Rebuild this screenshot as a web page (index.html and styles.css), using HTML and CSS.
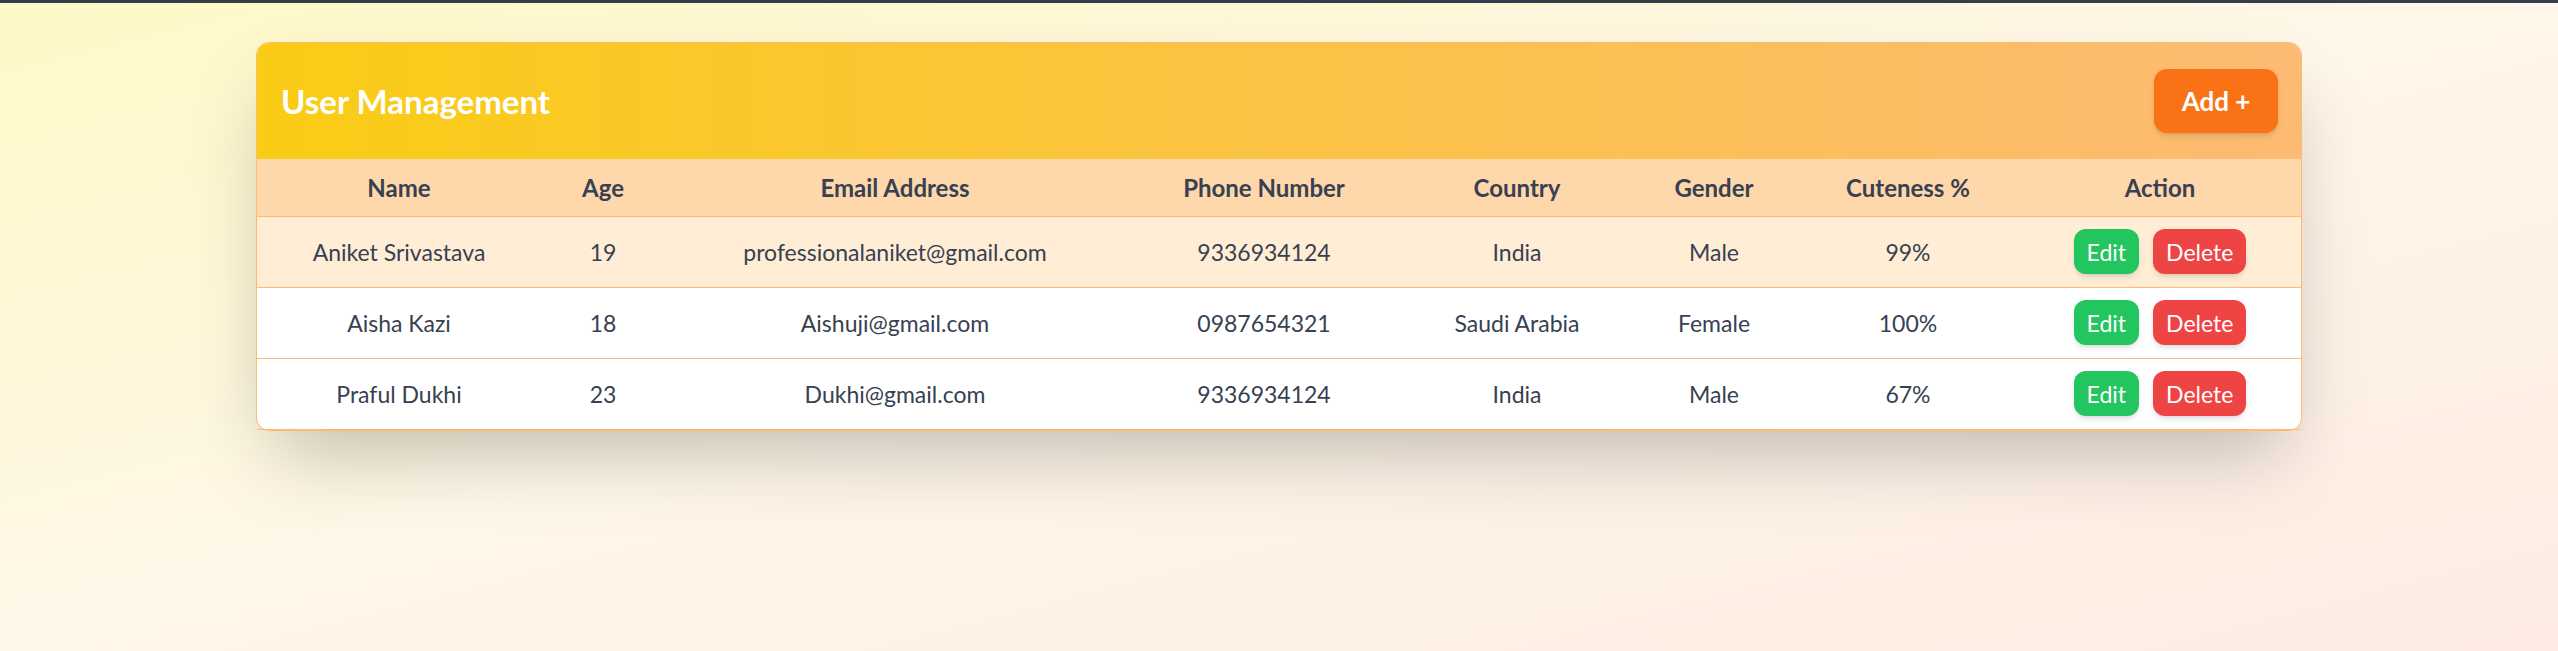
FILE: index.html
```html
<!DOCTYPE html>
<html lang="en">
<head>
<meta charset="utf-8">
<title>User Management</title>
<link rel="stylesheet" href="styles.css">
</head>
<body>
<div class="topbar"></div>
<main class="page">
  <section class="card">
    <header class="card-head">
      <h1 class="title">User Management</h1>
      <button class="btn btn-add">Add +</button>
    </header>
    <table class="users">
      <colgroup>
        <col class="c-name"><col class="c-age"><col class="c-email"><col class="c-phone">
        <col class="c-country"><col class="c-gender"><col class="c-cute"><col class="c-action">
      </colgroup>
      <thead>
        <tr>
          <th>Name</th><th>Age</th><th>Email Address</th><th>Phone Number</th>
          <th>Country</th><th>Gender</th><th>Cuteness %</th><th>Action</th>
        </tr>
      </thead>
      <tbody>
        <tr class="hl">
          <td>Aniket Srivastava</td><td>19</td><td>professionalaniket@gmail.com</td><td>9336934124</td>
          <td>India</td><td>Male</td><td>99%</td>
          <td><div class="actions"><button class="btn btn-edit">Edit</button><button class="btn btn-del">Delete</button></div></td>
        </tr>
        <tr>
          <td>Aisha Kazi</td><td>18</td><td>Aishuji@gmail.com</td><td>0987654321</td>
          <td>Saudi Arabia</td><td>Female</td><td>100%</td>
          <td><div class="actions"><button class="btn btn-edit">Edit</button><button class="btn btn-del">Delete</button></div></td>
        </tr>
        <tr>
          <td>Praful Dukhi</td><td>23</td><td>Dukhi@gmail.com</td><td>9336934124</td>
          <td>India</td><td>Male</td><td>67%</td>
          <td><div class="actions"><button class="btn btn-edit">Edit</button><button class="btn btn-del">Delete</button></div></td>
        </tr>
      </tbody>
    </table>
  </section>
</main>
</body>
</html>
```
FILE: styles.css
```css
* { box-sizing: border-box; }
html, body { margin: 0; padding: 0; }
body {
  min-height: 651px;
  font-family: Lato, "Open Sans", sans-serif;
  color: #374151;
  background: linear-gradient(to bottom right, #fef9c6 0%, #fff7e9 50%, #fdebe3 100%);
}
.topbar { height: 3px; background: #373c48; }
.page { padding-top: 39px; display: flex; justify-content: center; }
.card {
  width: 2046px;
  border: 1px solid #fdba74;
  border-radius: 13px;
  background: #fff;
  box-shadow: 0 37px 75px -18px rgba(0, 0, 0, 0.25);
}
.card-head {
  display: flex;
  align-items: center;
  justify-content: space-between;
  height: 116px;
  padding: 0 23px 0 24px;
  border-radius: 12px 12px 0 0;
  background: linear-gradient(to right, #facc15, #fdba74);
}
.title {
  margin: 0;
  font-size: 33px;
  font-weight: 700;
  color: #fff;
  line-height: 1;
}
.btn {
  border: 0;
  font-family: inherit;
  color: #fff;
  cursor: pointer;
  box-shadow: 0 4px 6px -1px rgba(0,0,0,0.1), 0 2px 4px -2px rgba(0,0,0,0.1);
}
.btn-add {
  width: 124px;
  height: 64px;
  border-radius: 13px;
  background: #f97316;
  font-size: 26px;
  font-weight: 700;
}
.users {
  width: 100%;
  table-layout: fixed;
  border-collapse: collapse;
  font-size: 23px;
}
.c-name { width: 284px; }
.c-age { width: 124px; }
.c-email { width: 460px; }
.c-phone { width: 278px; }
.c-country { width: 228px; }
.c-gender { width: 166px; }
.c-cute { width: 222px; }
.c-action { width: 282px; }
thead tr { background: #fed7aa; border-bottom: 1px solid #fdba74; }
th {
  height: 57px;
  padding: 0;
  font-size: 24px;
  font-weight: 700;
  color: #374151;
  text-align: center;
}
tbody tr { border-bottom: 1px solid #fdba74; }
tbody tr.hl { background: #ffedd5; }
td {
  height: 71px;
  padding: 0;
  text-align: center;
  color: #374151;
}
.actions { display: flex; justify-content: center; gap: 14px; }
.btn-edit, .btn-del {
  height: 45px;
  padding: 0 13px;
  border-radius: 12px;
  font-size: 23px;
}
.btn-edit { background: #22c55e; }
.btn-del { background: #ef4444; }
```
